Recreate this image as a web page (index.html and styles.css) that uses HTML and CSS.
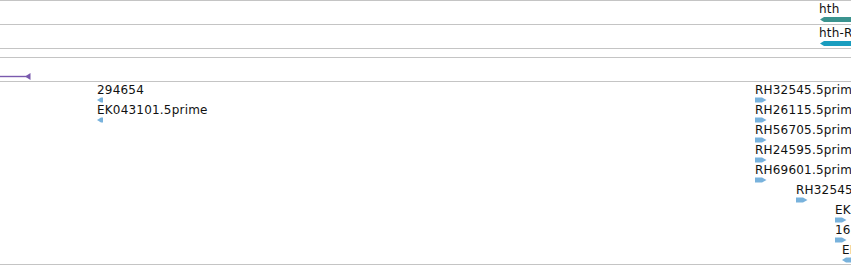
FILE: index.html
```html
<!DOCTYPE html>
<html lang="en">
<head>
    <meta charset="UTF-8">
    <title>Tracks</title>
    <link rel="stylesheet" href="styles.css">
</head>
<body>
    <div class="tracks">
        <div class="track gene">
            <div class="feature" style="left: 819px; top: 1px;">
                <div class="label">hth</div>
                <svg class="bar" width="40" height="5"><polygon points="1,2.5 5,0 40,0 40,5 5,5" fill="#3b938f"/></svg>
            </div>
        </div>
        <div class="track gene">
            <div class="feature" style="left: 819px; top: 1px;">
                <div class="label">hth-RA</div>
                <svg class="bar" width="40" height="5"><polygon points="1,2.5 5,0 40,0 40,5 5,5" fill="#1a9dbf"/></svg>
            </div>
        </div>
        <div class="track thin"></div>
        <div class="track gene">
            <svg class="transcript" width="40" height="23">
                <line x1="0" y1="18.5" x2="28" y2="18.5" stroke="#7a5aae" stroke-width="1.4"/>
                <polygon points="30.5,15 30.5,22 25,18.5" fill="#7a5aae"/>
            </svg>
        </div>
        <div class="track features">
            <div class="stack" style="left: 97px; top: 1px;">
                <div class="label">294654</div>
                <svg class="arrow" width="6" height="6"><polygon points="0,3 4,0.5 6,0.5 6,5.5 4,5.5" fill="#78b2dc"/></svg>
                <div class="label">EK043101.5prime</div>
                <svg class="arrow" width="6" height="6"><polygon points="0,3 4,0.5 6,0.5 6,5.5 4,5.5" fill="#78b2dc"/></svg>
            </div>
            <div class="stack" style="left: 755px; top: 1px;">
                <div class="label">RH32545.5prime</div>
                <svg class="arrow" width="12" height="6"><polygon points="0,0.5 7,0.5 11.5,3 7,5.5 0,5.5" fill="#78b2dc"/></svg>
                <div class="label">RH26115.5prime</div>
                <svg class="arrow" width="12" height="6"><polygon points="0,0.5 7,0.5 11.5,3 7,5.5 0,5.5" fill="#78b2dc"/></svg>
                <div class="label">RH56705.5prime</div>
                <svg class="arrow" width="12" height="6"><polygon points="0,0.5 7,0.5 11.5,3 7,5.5 0,5.5" fill="#78b2dc"/></svg>
                <div class="label">RH24595.5prime</div>
                <svg class="arrow" width="12" height="6"><polygon points="0,0.5 7,0.5 11.5,3 7,5.5 0,5.5" fill="#78b2dc"/></svg>
                <div class="label">RH69601.5prime</div>
                <svg class="arrow" width="12" height="6"><polygon points="0,0.5 7,0.5 11.5,3 7,5.5 0,5.5" fill="#78b2dc"/></svg>
            </div>
            <div class="stack" style="left: 796px; top: 101px;">
                <div class="label">RH32545.5prime</div>
                <svg class="arrow" width="12" height="6"><polygon points="0,0.5 7,0.5 11.5,3 7,5.5 0,5.5" fill="#78b2dc"/></svg>
            </div>
            <div class="stack" style="left: 835px; top: 121px;">
                <div class="label">EK043101.5prime</div>
                <svg class="arrow" width="12" height="6"><polygon points="0,0.5 7,0.5 11.5,3 7,5.5 0,5.5" fill="#78b2dc"/></svg>
                <div class="label">162045</div>
                <svg class="arrow" width="12" height="6"><polygon points="0,0.5 7,0.5 11.5,3 7,5.5 0,5.5" fill="#78b2dc"/></svg>
            </div>
            <div class="stack" style="left: 842px; top: 161px;">
                <div class="label">EK043101.5prime</div>
                <svg class="arrow" width="10" height="6"><polygon points="0,3 4,0.5 10,0.5 10,5.5 4,5.5" fill="#78b2dc"/></svg>
            </div>
        </div>
    </div>
</body>
</html>
```

FILE: styles.css
```css
body {
    margin: 0;
    background: #fff;
    font-family: "DejaVu Sans", sans-serif;
    font-size: 12px;
    color: #111;
    overflow: hidden;
}
.tracks {
    width: 851px;
    border-top: 1px solid #c4c4c4;
}
.track {
    position: relative;
    border-bottom: 1px solid #c4c4c4;
    overflow: hidden;
}
.gene {
    height: 23px;
}
.thin {
    height: 8px;
}
.features {
    height: 182px;
}
.feature,
.stack {
    position: absolute;
    display: flex;
    flex-direction: column;
    align-items: flex-start;
}
.label {
    line-height: 14px;
    letter-spacing: 0.2px;
    white-space: nowrap;
}
.bar {
    display: block;
    margin-top: 1px;
}
.arrow {
    display: block;
}
.transcript {
    display: block;
}
```
